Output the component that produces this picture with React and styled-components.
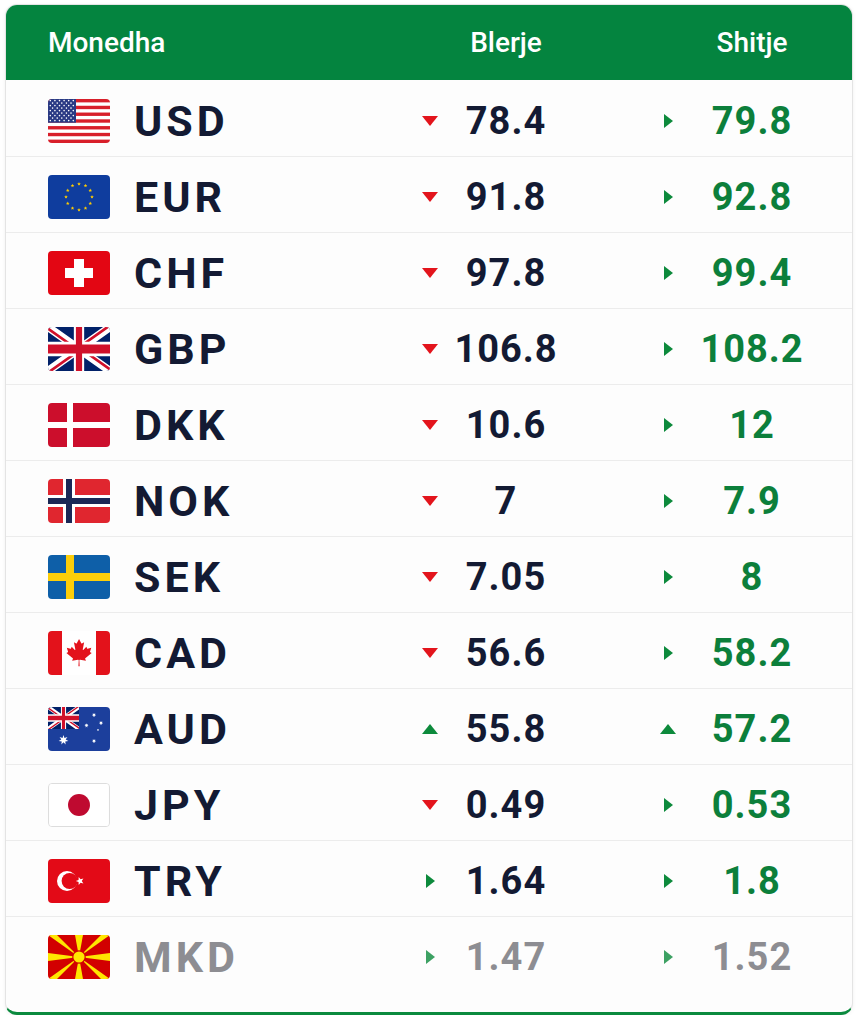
import React from "react"
import styled, { createGlobalStyle } from "styled-components"

const GlobalStyle = createGlobalStyle`
  html, body {
    margin: 0;
    padding: 0;
    background: #ffffff;
  }
  body {
    font-family: Roboto, "Liberation Sans", Arial, sans-serif;
  }
`

const Card = styled.div`
  margin: 4px 6px 0 5px;
  background: #fdfdfd;
  border: 1px solid #e4e4e4;
  border-bottom: 3px solid #0b8a3e;
  border-radius: 12px;
  overflow: hidden;
  box-shadow: 0 1px 4px rgba(0, 0, 0, 0.06);
  padding-bottom: 20px;
`

const Grid = styled.div`
  display: grid;
  grid-template-columns: 1fr 24px 128px 86px 24px 144px;
  align-items: center;
  padding: 0 28px 0 42px;
`

const HeadRow = styled(Grid)`
  height: 75px;
  background: #04843f;
  color: #ffffff;
  font-size: 28px;
  font-weight: 500;
`

const HeadCell = styled.div`
  text-align: ${(p) => (p.$center ? "center" : "left")};
  grid-column: ${(p) => p.$col || "auto"};
`

const Row = styled(Grid)`
  height: 76px;
  padding-top: 5px;
  border-top: ${(p) => (p.$first ? "none" : "1px solid #ececec")};
  box-sizing: border-box;
`

const Currency = styled.div`
  display: flex;
  align-items: center;
  gap: 24px;
`

const FlagBox = styled.div`
  width: 62px;
  height: 44px;
  border-radius: 4px;
  overflow: hidden;
  flex-shrink: 0;
  border: ${(p) => (p.$border ? "1px solid #dddddd" : "none")};
  box-sizing: border-box;

  & > svg {
    display: block;
    width: 100%;
    height: 100%;
  }
`

const Code = styled.div`
  font-size: 43px;
  font-weight: 700;
  letter-spacing: 4px;
  color: ${(p) => (p.$muted ? "#8d8d92" : "#131a33")};
`

const Value = styled.div`
  text-align: center;
  font-size: 38px;
  font-weight: 700;
  letter-spacing: 1px;
  color: ${(p) => (p.$muted ? "#8d8d92" : p.$green ? "#0c7f3b" : "#131a33")};
`

const ArrowCell = styled.div`
  display: flex;
  justify-content: center;
  align-items: center;
  opacity: ${(p) => (p.$muted ? 0.8 : 1)};
`

const Tri = styled.span`
  width: 0;
  height: 0;
  ${(p) =>
    p.$dir === "down"
      ? `border-left: 8px solid transparent;
         border-right: 8px solid transparent;
         border-top: 10px solid #e3141c;`
      : p.$dir === "up"
      ? `border-left: 8px solid transparent;
         border-right: 8px solid transparent;
         border-bottom: 10px solid #0d8a3c;`
      : `border-top: 7px solid transparent;
         border-bottom: 7px solid transparent;
         border-left: 9px solid #0d8a3c;`}
`

const star = (cx, cy, r, n = 5, inner = 0.45, rot = -90) => {
  const pts = []
  for (let i = 0; i < n * 2; i++) {
    const rad = i % 2 === 0 ? r : r * inner
    const a = ((rot + (i * 180) / n) * Math.PI) / 180
    pts.push(`${(cx + rad * Math.cos(a)).toFixed(2)},${(cy + rad * Math.sin(a)).toFixed(2)}`)
  }
  return pts.join(" ")
}

const UnionJack = ({ id }) => (
  <>
    <defs>
      <clipPath id={id}>
        <path d="M30,15 h30 v15 z v15 h-30 z h-30 v-15 z v-15 h30 z" />
      </clipPath>
    </defs>
    <rect width="60" height="30" fill="#012169" />
    <path d="M0,0 L60,30 M60,0 L0,30" stroke="#fff" strokeWidth="6" />
    <path d="M0,0 L60,30 M60,0 L0,30" clipPath={`url(#${id})`} stroke="#d0102a" strokeWidth="4" />
    <path d="M30,0 v30 M0,15 h60" stroke="#fff" strokeWidth="10" />
    <path d="M30,0 v30 M0,15 h60" stroke="#d0102a" strokeWidth="6" />
  </>
)

const US = () => {
  const dots = []
  for (let r = 0; r < 9; r++) {
    const count = r % 2 === 0 ? 6 : 5
    for (let c = 0; c < count; c++) {
      const x = (r % 2 === 0 ? 2.3 : 4.6) + c * 4.6
      dots.push(<circle key={`${r}-${c}`} cx={x} cy={1.6 + r * 2.5} r="0.8" fill="#fff" />)
    }
  }
  return (
    <svg viewBox="0 0 62 44">
      <rect width="62" height="44" fill="#fff" />
      {Array.from({ length: 7 }).map((_, i) => (
        <rect key={i} y={i * 6.77} width="62" height="3.38" fill="#d81f2a" />
      ))}
      <rect width="28" height="23.7" fill="#2a3a84" />
      {dots}
    </svg>
  )
}

const EU = () => (
  <svg viewBox="0 0 62 44">
    <rect width="62" height="44" fill="#0f3d9e" />
    {Array.from({ length: 12 }).map((_, i) => {
      const a = (i * 30 * Math.PI) / 180
      return <polygon key={i} points={star(31 + 13 * Math.sin(a), 22 - 13 * Math.cos(a), 1.9)} fill="#ffcc00" />
    })}
  </svg>
)

const CH = () => (
  <svg viewBox="0 0 62 44">
    <rect width="62" height="44" fill="#e30613" />
    <rect x="26" y="8" width="10" height="28" fill="#fff" />
    <rect x="17" y="17" width="28" height="10" fill="#fff" />
  </svg>
)

const GB = () => (
  <svg viewBox="0 0 60 30" preserveAspectRatio="none">
    <UnionJack id="gbclip" />
  </svg>
)

const DK = () => (
  <svg viewBox="0 0 62 44">
    <rect width="62" height="44" fill="#cc0e2c" />
    <rect x="19" width="6" height="44" fill="#fff" />
    <rect y="19" width="62" height="6" fill="#fff" />
  </svg>
)

const NO = () => (
  <svg viewBox="0 0 62 44">
    <rect width="62" height="44" fill="#e0262f" />
    <rect x="15" width="12" height="44" fill="#fff" />
    <rect y="16" width="62" height="12" fill="#fff" />
    <rect x="18" width="6" height="44" fill="#1b2856" />
    <rect y="19" width="62" height="6" fill="#1b2856" />
  </svg>
)

const SE = () => (
  <svg viewBox="0 0 62 44">
    <rect width="62" height="44" fill="#0e5fa8" />
    <rect x="18" width="8" height="44" fill="#fcce0a" />
    <rect y="18" width="62" height="8" fill="#fcce0a" />
  </svg>
)

const CA = () => (
  <svg viewBox="0 0 62 44">
    <rect width="62" height="44" fill="#fff" />
    <rect width="14" height="44" fill="#e3121b" />
    <rect x="48" width="14" height="44" fill="#e3121b" />
    <g transform="translate(-1.6 5.2) scale(0.0068)">
      <path
        fill="#e3121b"
        d="M4890 4430l-45-863a95 95 0 0 1 111-98l859 151-116-320a65 65 0 0 1 20-73l941-762-212-99a65 65 0 0 1-34-79l186-572-542 115a65 65 0 0 1-73-38l-105-247-423 454a65 65 0 0 1-111-57l204-1052-327 189a65 65 0 0 1-91-27l-332-652-332 652a65 65 0 0 1-91 27l-327-189 204 1052a65 65 0 0 1-111 57l-423-454-105 247a65 65 0 0 1-73 38l-542-115 186 572a65 65 0 0 1-34 79l-212 99 941 762a65 65 0 0 1 20 73l-116 320 859-151a95 95 0 0 1 111 98l-45 863z"
      />
    </g>
  </svg>
)

const AU = () => (
  <svg viewBox="0 0 62 44">
    <rect width="62" height="44" fill="#1c3f9c" />
    <svg x="0" y="0" width="31" height="22" viewBox="0 0 60 30" preserveAspectRatio="none">
      <UnionJack id="auclip" />
    </svg>
    <polygon points={star(15.5, 33, 5, 7, 0.45)} fill="#fff" />
    <polygon points={star(46, 8, 2.2, 7, 0.45)} fill="#fff" />
    <polygon points={star(53, 16, 2.2, 7, 0.45)} fill="#fff" />
    <polygon points={star(38.5, 18.5, 2.2, 7, 0.45)} fill="#fff" />
    <polygon points={star(50, 23, 1.3, 5, 0.45)} fill="#fff" />
    <polygon points={star(46, 34, 2.2, 7, 0.45)} fill="#fff" />
  </svg>
)

const JP = () => (
  <svg viewBox="0 0 62 44">
    <rect width="62" height="44" fill="#fff" />
    <circle cx="31" cy="22" r="11.5" fill="#bf0a30" />
  </svg>
)

const TR = () => (
  <svg viewBox="0 0 62 44">
    <rect width="62" height="44" fill="#e30a17" />
    <circle cx="19" cy="22" r="10" fill="#fff" />
    <circle cx="21.6" cy="22" r="8" fill="#e30a17" />
    <polygon points={star(32, 22, 4.2, 5, 0.42, 180)} fill="#fff" />
  </svg>
)

const MK = () => {
  const cx = 31
  const cy = 22
  const ends = [
    [[0, 0], [9, 0]],
    [[62, 0], [53, 0]],
    [[0, 44], [9, 44]],
    [[62, 44], [53, 44]],
    [[27, 0], [35, 0]],
    [[27, 44], [35, 44]],
    [[0, 18], [0, 26]],
    [[62, 18], [62, 26]],
  ]
  return (
    <svg viewBox="0 0 62 44">
      <rect width="62" height="44" fill="#d20000" />
      {ends.map((e, i) => (
        <polygon key={i} points={`${cx},${cy} ${e[0][0]},${e[0][1]} ${e[1][0]},${e[1][1]}`} fill="#ffe600" />
      ))}
      <circle cx={cx} cy={cy} r="6.8" fill="#d20000" />
      <circle cx={cx} cy={cy} r="5.6" fill="#ffe600" />
    </svg>
  )
}

const rates = [
  { code: "USD", Flag: US, buy: "78.4", buyDir: "down", sell: "79.8", sellDir: "right" },
  { code: "EUR", Flag: EU, buy: "91.8", buyDir: "down", sell: "92.8", sellDir: "right" },
  { code: "CHF", Flag: CH, buy: "97.8", buyDir: "down", sell: "99.4", sellDir: "right" },
  { code: "GBP", Flag: GB, buy: "106.8", buyDir: "down", sell: "108.2", sellDir: "right" },
  { code: "DKK", Flag: DK, buy: "10.6", buyDir: "down", sell: "12", sellDir: "right" },
  { code: "NOK", Flag: NO, buy: "7", buyDir: "down", sell: "7.9", sellDir: "right" },
  { code: "SEK", Flag: SE, buy: "7.05", buyDir: "down", sell: "8", sellDir: "right" },
  { code: "CAD", Flag: CA, buy: "56.6", buyDir: "down", sell: "58.2", sellDir: "right" },
  { code: "AUD", Flag: AU, buy: "55.8", buyDir: "up", sell: "57.2", sellDir: "up" },
  { code: "JPY", Flag: JP, buy: "0.49", buyDir: "down", sell: "0.53", sellDir: "right", border: true },
  { code: "TRY", Flag: TR, buy: "1.64", buyDir: "right", sell: "1.8", sellDir: "right" },
  { code: "MKD", Flag: MK, buy: "1.47", buyDir: "right", sell: "1.52", sellDir: "right", muted: true },
]

const App = () => {
  return (
    <>
      <GlobalStyle />
      <Card>
        <HeadRow>
          <HeadCell>Monedha</HeadCell>
          <HeadCell $col="3" $center>
            Blerje
          </HeadCell>
          <HeadCell $col="6" $center>
            Shitje
          </HeadCell>
        </HeadRow>
        {rates.map((r, i) => (
          <Row key={r.code} $first={i === 0}>
            <Currency>
              <FlagBox $border={r.border}>
                <r.Flag />
              </FlagBox>
              <Code $muted={r.muted}>{r.code}</Code>
            </Currency>
            <ArrowCell $muted={r.muted}>
              <Tri $dir={r.buyDir} />
            </ArrowCell>
            <Value $muted={r.muted}>{r.buy}</Value>
            <div />
            <ArrowCell $muted={r.muted}>
              <Tri $dir={r.sellDir} />
            </ArrowCell>
            <Value $green $muted={r.muted}>
              {r.sell}
            </Value>
          </Row>
        ))}
      </Card>
    </>
  )
}

export default App
